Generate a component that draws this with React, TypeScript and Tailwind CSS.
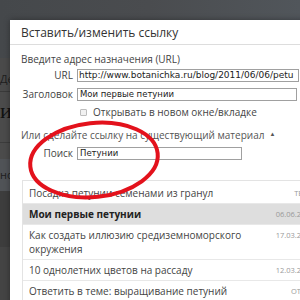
import React from "react";

const sans = { fontFamily: '"Open Sans", "Noto Sans", sans-serif' };
const mono = { fontFamily: '"DejaVu Sans", sans-serif' };

type Row = { title: string; meta: string; active?: boolean };

const rows: Row[] = [
  { title: "Посадка петунии семенами из гранул", meta: "ТЕМА" },
  { title: "Мои первые петунии", meta: "06.06.2011", active: true },
  { title: "Как создать иллюзию средиземноморского окружения", meta: "17.03.2011" },
  { title: "10 однолетних цветов на рассаду", meta: "12.03.2011" },
  { title: "Ответить в теме: выращивание петуний", meta: "ОТВЕТ" },
  { title: "Петунии на балконе", meta: "01.03.2011" },
];

export default function App() {
  return (
    <div className="relative w-[300px] h-[300px] overflow-hidden bg-[#444]" style={sans}>
      {/* page behind the overlay */}
      <div className="flex flex-col h-full">
        <div className="h-[58px] bg-gradient-to-r from-[#45484b] via-[#4a4c4f] to-[#51565b]" />
        <div className="h-[34px] bg-[#4a4a4a] border-b border-[#3a3a3a] flex items-end pb-[6px] text-[11px] text-[#1e1e1e] leading-[12px]">
          Де
        </div>
        <div className="h-[51px] bg-[#4b4b4b] border-b border-[#3c3c3c] pt-[6px] text-[22px] leading-[26px] text-[#111]" style={{ fontFamily: '"Liberation Serif", serif' }}>
          ия
        </div>
        <div className="h-[16px] bg-[#4b4b4b]" />
        <div className="h-[32px] bg-[#505357] flex items-center text-[11px] text-[#1e1e1e]">но</div>
        <div className="h-[56px] bg-[#3d3d3d]" />
        <div className="flex-1 bg-[#444]" />
      </div>

      {/* dialog */}
      <div className="absolute left-[10px] top-[20px] w-[340px] h-[300px] bg-white shadow-[0_0_6px_rgba(0,0,0,0.35)] flex flex-col">
        <div className="h-[25px] border-b border-[#dddddd] pl-[11px] text-[12px] leading-[25px] text-[#333]">
          Вставить/изменить ссылку
        </div>
        <div className="pl-[11px] flex flex-col">
          <div className="mt-[7px] h-[14px] text-[10px] leading-[14px] text-[#444]">
            Введите адрес назначения (URL)
          </div>
          <div className="mt-[3px] flex items-center gap-[4px]">
            <div className="w-[52px] text-right text-[10px] leading-[13px] text-[#444]">URL</div>
            <div className="w-[222px] h-[13px] border border-[#a0a0a0] pl-[1px] text-[9px] leading-[11px] text-[#222] whitespace-nowrap overflow-hidden" style={mono}>
              http://www.botanichka.ru/blog/2011/06/06/petu
            </div>
          </div>
          <div className="mt-[6px] flex items-center gap-[4px]">
            <div className="w-[52px] text-right text-[10px] leading-[13px] text-[#444] whitespace-nowrap">Заголовок</div>
            <div className="w-[220px] h-[13px] border border-[#a0a0a0] pl-[2px] text-[8.5px] leading-[11px] text-[#222] whitespace-nowrap overflow-hidden" style={mono}>
              Мои первые петунии
            </div>
          </div>
          <div className="mt-[5px] h-[12px] flex items-center pl-[59px] gap-[6px]">
            <div className="w-[7px] h-[7px] border border-[#bdbdbd] bg-[#f1f1f1] rounded-[1px]" />
            <div className="text-[10px] leading-[12px] text-[#444]">Открывать в новом окне/вкладке</div>
          </div>
          <div className="mt-[10px] h-[14px] flex items-center gap-[5px] text-[10px] leading-[14px] text-[#555]">
            <span>Или сделайте ссылку на существующий материал</span>
            <span className="text-[6px] leading-[6px] text-[#555] -mt-[3px]">▲</span>
          </div>
          <div className="mt-[5px] flex items-center gap-[4px]">
            <div className="w-[52px] text-right text-[10px] leading-[13px] text-[#444]">Поиск</div>
            <div className="w-[165px] h-[13px] border border-[#a0a0a0] pl-[2px] text-[8.5px] leading-[11px] text-[#222]" style={mono}>
              Петунии
            </div>
          </div>
        </div>
        <div className="mt-[20px] ml-[12px] w-[304px] border-t border-l border-[#e3e3e3] flex flex-col">
          {rows.map((r, i) => (
            <div
              key={i}
              className={`flex items-start border-b border-[#e8e8e8] pl-[6px] pr-[12px] ${i === 0 ? "pt-[5px] pb-[3px]" : "py-[3px]"} ${r.active ? "bg-[#dedede]" : ""}`}
            >
              <div className={`w-[246px] text-[10px] leading-[14px] ${r.active ? "font-bold text-[#222]" : "text-[#444]"}`}>
                {r.title}
              </div>
              <div className="flex-1 text-right text-[7.5px] leading-[14px] text-[#999] whitespace-nowrap">{r.meta}</div>
            </div>
          ))}
        </div>
      </div>

      {/* red marker ellipse */}
      <svg className="absolute inset-0 pointer-events-none" width="300" height="300" viewBox="0 0 300 300">
        <ellipse cx="94" cy="160" rx="64" ry="37" transform="rotate(-6 94 160)" fill="none" stroke="#e3121c" strokeWidth="4" />
      </svg>
    </div>
  );
}
